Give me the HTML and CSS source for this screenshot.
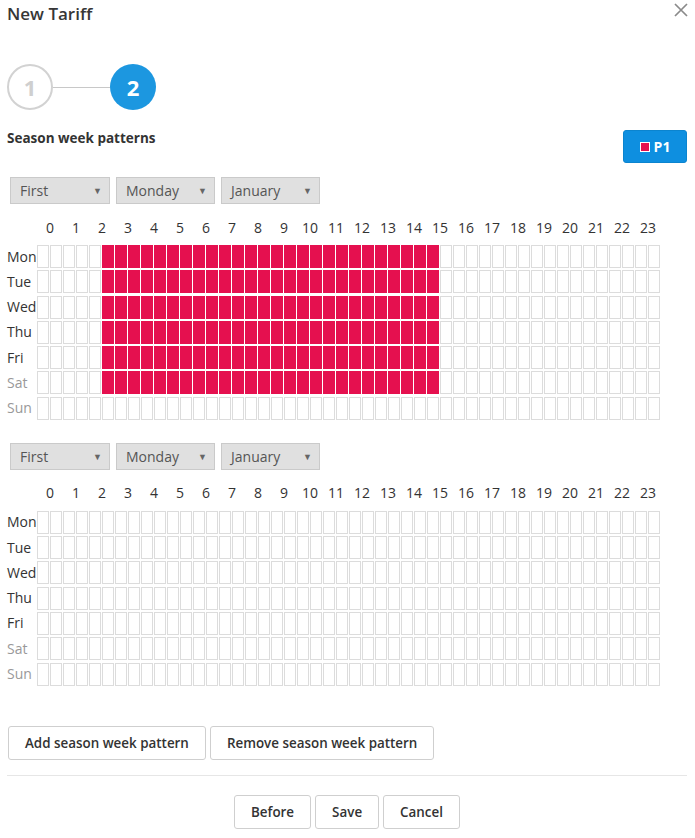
FILE: index.html
```html
<!DOCTYPE html>
<html>
<head>
<meta charset="utf-8">
<link rel="stylesheet" href="styles.css">
</head>
<body>
<div class="modal">
  <div class="header">
    <div class="title">New Tariff</div>
    <svg class="close" width="14" height="14" viewBox="0 0 14 14"><path d="M1 1 L13 13 M13 1 L1 13" stroke="#8a8a8a" stroke-width="1.7" fill="none"/></svg>
  </div>
  <div class="stepper">
    <div class="step done">1</div>
    <div class="step-line"></div>
    <div class="step active">2</div>
  </div>
  <div class="section-head">
    <div class="section-title">Season week patterns</div>
    <button class="p1"><span class="swatch"></span>P1</button>
  </div>
  <div id="patterns"></div>
  <div class="actions">
    <button class="btn">Add season week pattern</button>
    <button class="btn">Remove season week pattern</button>
  </div>
  <div class="divider"></div>
  <div class="footer">
    <button class="btn">Before</button>
    <button class="btn">Save</button>
    <button class="btn">Cancel</button>
  </div>
</div>
<script src="app.js"></script>
</body>
</html>
```
FILE: app.js
```js
(function () {
  var days = ['Mon', 'Tue', 'Wed', 'Thu', 'Fri', 'Sat', 'Sun'];
  var patterns = [
    { filled: function (d, c) { return d < 6 && c >= 5 && c <= 30; } },
    { filled: function () { return false; } }
  ];
  var root = document.getElementById('patterns');
  patterns.forEach(function (p) {
    var block = document.createElement('div');
    block.className = 'pattern';
    var sel = document.createElement('div');
    sel.className = 'selects';
    ['First', 'Monday', 'January'].forEach(function (t) {
      var s = document.createElement('div');
      s.className = 'select';
      s.innerHTML = '<span>' + t + '</span><span class="arrow">&#9660;</span>';
      sel.appendChild(s);
    });
    block.appendChild(sel);
    var hours = document.createElement('div');
    hours.className = 'hours';
    for (var h = 0; h < 24; h++) {
      var l = document.createElement('div');
      l.className = 'hour';
      l.textContent = h;
      hours.appendChild(l);
    }
    block.appendChild(hours);
    var grid = document.createElement('div');
    grid.className = 'grid';
    days.forEach(function (d, di) {
      var row = document.createElement('div');
      row.className = 'row';
      var lab = document.createElement('div');
      lab.className = 'day' + (di >= 5 ? ' weekend' : '');
      lab.textContent = d;
      row.appendChild(lab);
      for (var c = 0; c < 48; c++) {
        var cell = document.createElement('div');
        cell.className = 'cell' + (p.filled(di, c) ? ' on' : '');
        row.appendChild(cell);
      }
      grid.appendChild(row);
    });
    block.appendChild(grid);
    root.appendChild(block);
  });
})();
```
FILE: styles.css
```css
* { box-sizing: border-box; }
html, body { margin: 0; padding: 0; background: #fff; }
body {
  font-family: "Open Sans", "Noto Sans", sans-serif;
  color: #333;
  font-size: 14px;
}
.modal {
  width: 695px;
  padding: 0 8px 0 7px;
}
.header {
  display: flex;
  justify-content: space-between;
  align-items: flex-start;
  height: 64px;
}
.title {
  font-size: 17px;
  font-weight: 600;
  line-height: 20px;
  margin-top: 4px;
  color: #363636;
}
.close { margin-top: 3px; margin-right: -1px; }
.stepper {
  display: flex;
  align-items: center;
  height: 46px;
}
.step {
  width: 46px;
  height: 46px;
  border-radius: 50%;
  display: flex;
  align-items: center;
  justify-content: center;
  font-size: 22px;
  font-weight: 700;
}
.step.done {
  border: 2px solid #d2d2d2;
  color: #cfcfcf;
}
.step.active {
  background: #1c97e0;
  color: #fff;
}
.step-line {
  width: 57px;
  height: 1px;
  background: #c8c8c8;
}
.section-head {
  display: flex;
  justify-content: space-between;
  align-items: flex-start;
  margin-top: 20px;
}
.section-title {
  font-weight: 700;
  font-size: 13.5px;
  line-height: 17px;
}
.p1 {
  width: 64px;
  height: 33px;
  background: #0e8fe0;
  border: 1px solid #0b84cf;
  border-radius: 3px;
  color: #fff;
  font-family: inherit;
  font-weight: 700;
  font-size: 14px;
  display: flex;
  align-items: center;
  justify-content: center;
  gap: 4px;
  padding: 0;
}
.swatch {
  width: 10px;
  height: 10px;
  background: #e5104f;
  border: 1px solid #fff;
}
.pattern { margin-bottom: 23px; }
.pattern:first-child { margin-top: 14px; }
.selects {
  display: flex;
  gap: 6px;
  padding-left: 3px;
}
.select {
  width: 100px;
  height: 27px;
  background: #e0e0e0;
  border: 1px solid #cacaca;
  display: flex;
  align-items: center;
  justify-content: space-between;
  padding: 0 7px 0 9px;
  color: #555;
  font-size: 14px;
}
.select:nth-child(2), .select:nth-child(3) { width: 99px; }
.arrow { font-size: 9px; color: #666; }
.hours {
  display: flex;
  padding-left: 30px;
  margin-top: 13px;
  height: 20px;
  align-items: center;
}
.hour {
  width: 26px;
  text-align: center;
  font-size: 14px;
  color: #333;
}
.grid {
  margin-top: 8px;
  display: flex;
  flex-direction: column;
  gap: 2.3px;
}
.row {
  display: flex;
  align-items: center;
  height: 23px;
}
.day {
  width: 30px;
  font-size: 14px;
  line-height: 18px;
  color: #333;
  white-space: nowrap;
}
.day.weekend { color: #999; }
.cell {
  width: 12px;
  height: 23px;
  border: 1px solid #dcdcdc;
  margin-right: 1px;
  flex: none;
}
.cell.on {
  background: #e5104f;
  border-color: #e5104f;
}
.actions {
  display: flex;
  gap: 4px;
  margin-top: 40px;
  padding-left: 1px;
}
.btn {
  height: 34px;
  background: #fff;
  border: 1px solid #cfcfcf;
  border-radius: 3px;
  font-family: inherit;
  font-size: 13.4px;
  font-weight: 600;
  color: #333;
  padding: 0 16px;
}
.divider {
  height: 1px;
  background: #e6e6e6;
  margin-top: 15px;
}
.footer {
  display: flex;
  justify-content: center;
  gap: 4px;
  margin-top: 19px;
}
```
